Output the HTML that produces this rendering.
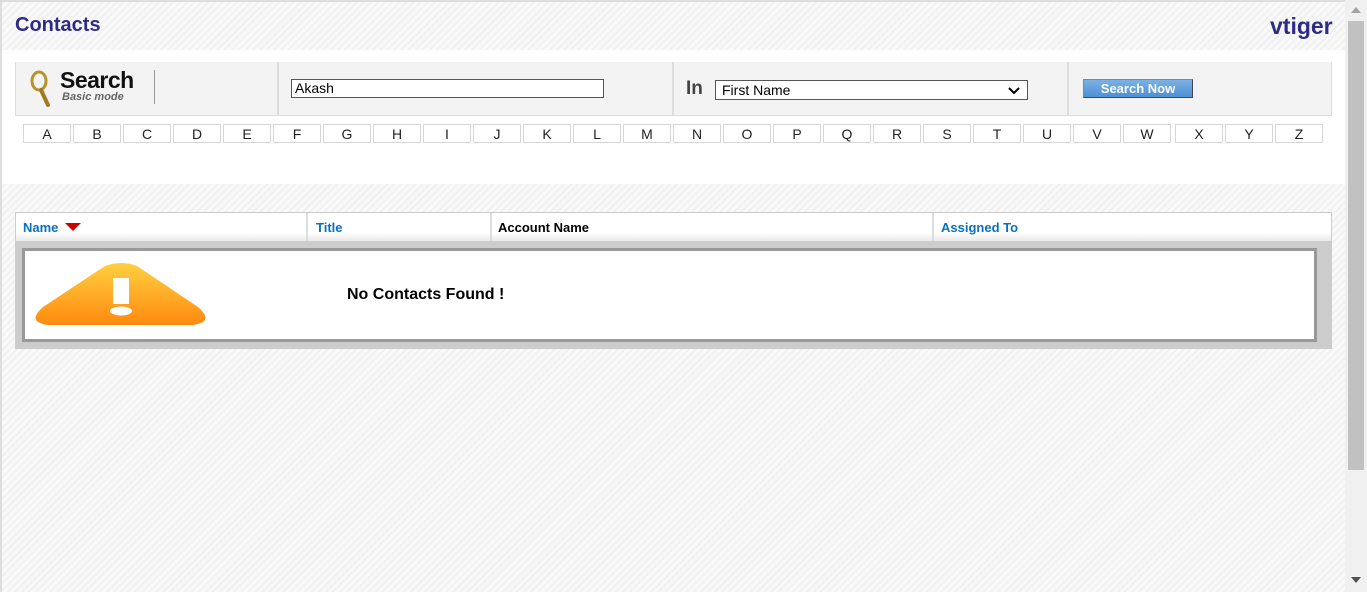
<!DOCTYPE html>
<html><head><style>
*{margin:0;padding:0;box-sizing:border-box}
body{width:1367px;height:592px;overflow:hidden;font-family:"Liberation Sans",Arial,sans-serif;background:#f6f6f6;position:relative}
.stripe{background:repeating-linear-gradient(135deg,#f9f9f9 0 3px,#f1f1f1 3px 5px)}
.a{position:absolute}
.L{position:absolute;top:124px;height:19px;width:48px;border:1px solid #d6d6d6;background:#fff;font-size:14px;text-align:center;line-height:18px;color:#222}
.sec{position:absolute;top:62px;height:53px;background:#f3f3f3}
</style></head><body>
<div class="a stripe" style="left:0;top:0;width:1345px;height:592px"></div>
<div class="a" style="left:0;top:0;width:1345px;height:2px;background:#ddd"></div>
<div class="a" style="left:0;top:0;width:2px;height:592px;background:#ddd"></div>
<div class="a" style="left:2px;top:50px;width:1343px;height:134px;background:#fff"></div>
<div class="a" style="left:15px;top:14px;font-size:20px;font-weight:bold;color:#2f2c86">Contacts</div>
<div class="a" style="left:1270px;top:13px;font-size:23px;font-weight:bold;color:#2f2c86">vtiger</div>

<div class="a" style="left:15px;top:62px;width:1317px;height:54px;background:#ddd"></div>
<div class="sec stripe" style="left:16px;width:261px"></div>
<div class="sec" style="left:279px;width:393px"></div>
<div class="sec stripe" style="left:674px;width:393px"></div>
<div class="sec stripe" style="left:1069px;width:262px"></div>
<svg class="a" style="left:28px;top:68px" width="26" height="40"><ellipse cx="11" cy="13" rx="7" ry="9" fill="none" stroke="#b8922a" stroke-width="3"/><line x1="13" y1="22" x2="20" y2="37" stroke="#a07a20" stroke-width="4" stroke-linecap="round"/></svg>
<div class="a" style="left:60px;top:67px;font-size:23px;font-weight:bold;color:#111;letter-spacing:-0.5px">Search</div>
<div class="a" style="left:62px;top:91px;font-size:11px;font-style:italic;font-weight:bold;color:#666">Basic mode</div>
<div class="a" style="left:154px;top:70px;width:1px;height:34px;background:#999"></div>
<div class="a" style="left:291px;top:79px;width:313px;height:19px;border:1px solid #555;background:#fff;font-size:14px;padding-left:3px;line-height:16px">Akash</div>
<div class="a" style="left:686px;top:78px;font-size:19px;font-weight:bold;color:#444">In</div>
<div class="a" style="left:715px;top:80px;width:313px;height:20px;border:1px solid #555;background:#fff;font-size:14px;padding-left:6px;line-height:18px">First Name</div>
<svg class="a" style="left:1008px;top:86px" width="12" height="9"><path d="M1 2L6 7L11 2" fill="none" stroke="#000" stroke-width="2"/></svg>
<div class="a" style="left:1083px;top:79px;width:110px;height:19px;background:linear-gradient(#7ab2e6,#4f8fd3);border:1px solid #6a8cb0;border-bottom-color:#445;border-right-color:#445;color:#fff;font-size:13px;font-weight:bold;text-align:center;line-height:17px">Search Now</div>

<div class="L" style="left:23px">A</div><div class="L" style="left:73px">B</div><div class="L" style="left:123px">C</div><div class="L" style="left:173px">D</div><div class="L" style="left:223px">E</div><div class="L" style="left:273px">F</div><div class="L" style="left:323px">G</div><div class="L" style="left:373px">H</div><div class="L" style="left:423px">I</div><div class="L" style="left:473px">J</div><div class="L" style="left:523px">K</div><div class="L" style="left:573px">L</div><div class="L" style="left:623px">M</div><div class="L" style="left:673px">N</div><div class="L" style="left:723px">O</div><div class="L" style="left:773px">P</div><div class="L" style="left:823px">Q</div><div class="L" style="left:873px">R</div><div class="L" style="left:923px">S</div><div class="L" style="left:973px">T</div><div class="L" style="left:1023px">U</div><div class="L" style="left:1073px">V</div><div class="L" style="left:1123px">W</div><div class="L" style="left:1175px">X</div><div class="L" style="left:1225px">Y</div><div class="L" style="left:1275px">Z</div>

<div class="a" style="left:15px;top:212px;width:1317px;height:137px;background:#ccc"></div>
<div class="a" style="left:16px;top:213px;width:1315px;height:28px;background:linear-gradient(#fff 0 20px,#e8e8e8)"></div>
<div class="a" style="left:306px;top:213px;width:2px;height:28px;background:#ddd"></div>
<div class="a" style="left:490px;top:213px;width:2px;height:28px;background:#ddd"></div>
<div class="a" style="left:932px;top:213px;width:2px;height:28px;background:#ddd"></div>
<div class="a" style="left:23px;top:220px;font-size:13px;font-weight:bold;color:#0a70c0">Name</div>
<svg class="a" style="left:65px;top:223px" width="16" height="9"><path d="M0 0H16L8 8Z" fill="#c00"/></svg>
<div class="a" style="left:316px;top:220px;font-size:13px;font-weight:bold;color:#0a70c0">Title</div>
<div class="a" style="left:498px;top:220px;font-size:13px;font-weight:bold;color:#000">Account Name</div>
<div class="a" style="left:941px;top:220px;font-size:13px;font-weight:bold;color:#0a70c0">Assigned To</div>
<div class="a" style="left:22px;top:248px;width:1295px;height:94px;border:3px solid #999;background:#fff"></div>
<svg class="a" style="left:33px;top:262px" width="175" height="66"><defs><linearGradient id="g" x1="0" y1="0" x2="0" y2="1"><stop offset="0" stop-color="#ffd040"/><stop offset="1" stop-color="#ff8a10"/></linearGradient></defs><path d="M72 4Q88 -2 104 4L165 45Q182 60 160 63H15Q-7 60 10 45Z" fill="url(#g)"/><rect x="80" y="16" width="16" height="26" fill="#fff"/><ellipse cx="88" cy="49" rx="11" ry="4.5" fill="#fff"/></svg>
<div class="a" style="left:347px;top:286px;font-size:16px;font-weight:bold;color:#000">No Contacts Found !</div>

<div class="a" style="left:1345px;top:0;width:22px;height:592px;background:#f0f0f0"></div>
<div class="a" style="left:1348px;top:21px;width:16px;height:449px;background:#c1c1c1"></div>
<svg class="a" style="left:1351px;top:7px" width="10" height="6"><path d="M0 6L5 0L10 6Z" fill="#a3a3a3"/></svg>
<svg class="a" style="left:1351px;top:577px" width="10" height="6"><path d="M0 0L5 6L10 0Z" fill="#505050"/></svg>
</body></html>
